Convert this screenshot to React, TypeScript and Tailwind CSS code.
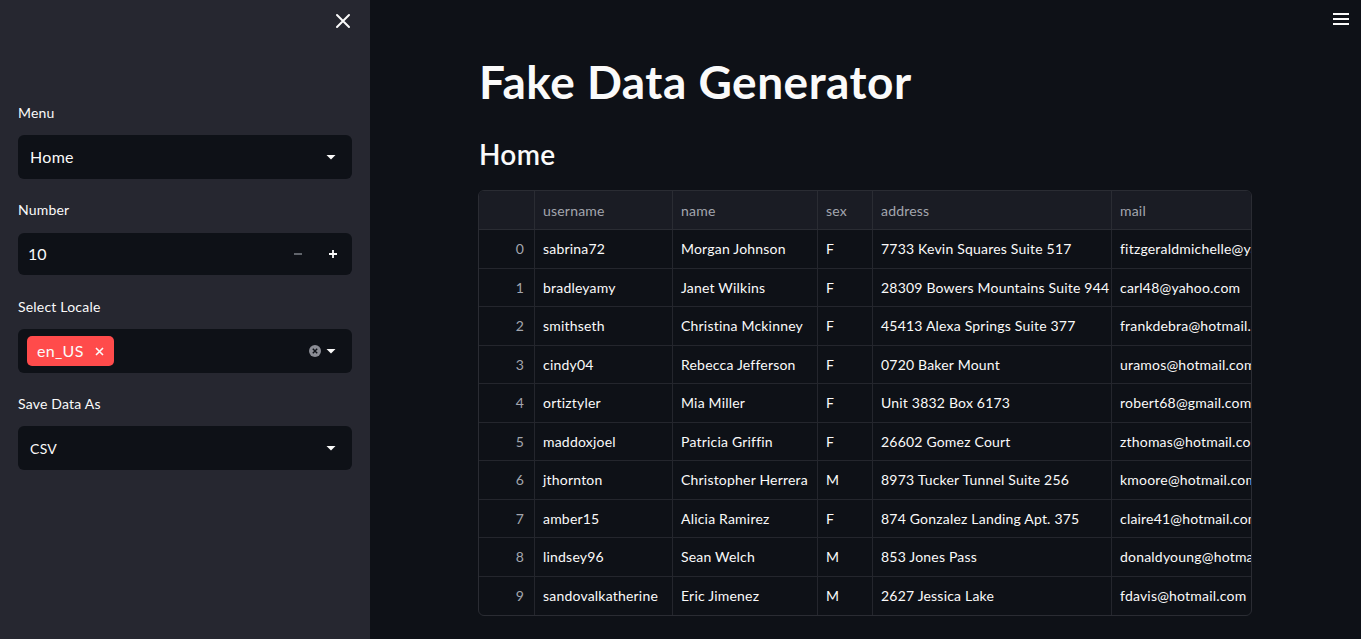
import React from "react";

const rows = [
  ["sabrina72", "Morgan Johnson", "F", "7733 Kevin Squares Suite 517", "fitzgeraldmichelle@yahoo.com"],
  ["bradleyamy", "Janet Wilkins", "F", "28309 Bowers Mountains Suite 944", "carl48@yahoo.com"],
  ["smithseth", "Christina Mckinney", "F", "45413 Alexa Springs Suite 377", "frankdebra@hotmail.com"],
  ["cindy04", "Rebecca Jefferson", "F", "0720 Baker Mount", "uramos@hotmail.com"],
  ["ortiztyler", "Mia Miller", "F", "Unit 3832 Box 6173", "robert68@gmail.com"],
  ["maddoxjoel", "Patricia Griffin", "F", "26602 Gomez Court", "zthomas@hotmail.com"],
  ["jthornton", "Christopher Herrera", "M", "8973 Tucker Tunnel Suite 256", "kmoore@hotmail.com"],
  ["amber15", "Alicia Ramirez", "F", "874 Gonzalez Landing Apt. 375", "claire41@hotmail.com"],
  ["lindsey96", "Sean Welch", "M", "853 Jones Pass", "donaldyoung@hotmail.com"],
  ["sandovalkatherine", "Eric Jimenez", "M", "2627 Jessica Lake", "fdavis@hotmail.com"],
];

const cols = [
  { key: "username", w: "w-[138px]" },
  { key: "name", w: "w-[145px]" },
  { key: "sex", w: "w-[55px]" },
  { key: "address", w: "w-[239px]" },
  { key: "mail", w: "w-[200px]" },
];

const Caret = () => (
  <svg width="12" height="12" viewBox="0 0 12 12" className="shrink-0">
    <path d="M1.5 4h9L6 8.5z" fill="#fafafa" />
  </svg>
);

const Label = ({ children, mb = "mb-[13px]" }: { children: React.ReactNode; mb?: string }) => (
  <div className={`text-[14px] text-[#fafafa] leading-[18px] tracking-[0.2px] ${mb}`}>{children}</div>
);

const App = () => {
  return (
    <div className="flex w-[1361px] h-[639px] overflow-hidden bg-[#0e1117] font-['Lato','Noto_Sans',sans-serif] text-[#fafafa]">
      <aside className="w-[370px] shrink-0 bg-[#262730] px-[18px] flex flex-col">
        <div className="flex justify-end pt-[13px] h-[104px]">
          <svg width="16" height="16" viewBox="0 0 16 16" className="mr-[1px]">
            <path d="M2 2l12 12M14 2L2 14" stroke="#fafafa" strokeWidth="2" strokeLinecap="round" />
          </svg>
        </div>

        <Label>Menu</Label>
        <div className="h-[44px] rounded-[6px] bg-[#0e1117] flex items-center justify-between pl-[12px] pr-[15px] mb-[22px]">
          <span className="text-[16px] tracking-[0.3px]">Home</span>
          <Caret />
        </div>

        <Label mb="mb-[14px]">Number</Label>
        <div className="h-[42px] rounded-[6px] bg-[#0e1117] flex items-center pl-[10px] mb-[23px]">
          <span className="text-[16px] flex-1">10</span>
          <div className="flex items-center gap-[25px] pr-[14px]">
            <svg width="10" height="10" viewBox="0 0 10 10">
              <path d="M1 5h8" stroke="#7d8089" strokeWidth="1.5" />
            </svg>
            <svg width="10" height="10" viewBox="0 0 10 10">
              <path d="M1 5h8M5 1v8" stroke="#fafafa" strokeWidth="1.8" />
            </svg>
          </div>
        </div>

        <Label>Select Locale</Label>
        <div className="h-[44px] rounded-[6px] bg-[#0e1117] flex items-center pl-[9px] pr-[15px] mb-[22px]">
          <div className="h-[30px] px-[10px] rounded-[5px] bg-[#ff4b4b] flex items-center gap-[11px] text-[16px] tracking-[0.3px]">
            <span>en_US</span>
            <svg width="9" height="9" viewBox="0 0 9 9">
              <path d="M1 1l7 7M8 1L1 8" stroke="#fafafa" strokeWidth="1.6" />
            </svg>
          </div>
          <div className="flex-1" />
          <svg width="12" height="12" viewBox="0 0 12 12" className="mr-[4px]">
            <circle cx="6" cy="6" r="6" fill="#8b8d95" />
            <path d="M3.8 3.8l4.4 4.4M8.2 3.8L3.8 8.2" stroke="#0e1117" strokeWidth="1.4" />
          </svg>
          <Caret />
        </div>

        <Label>Save Data As</Label>
        <div className="h-[44px] rounded-[6px] bg-[#0e1117] flex items-center justify-between pl-[12px] pr-[15px]">
          <span className="text-[14px] tracking-[0.3px]">CSV</span>
          <Caret />
        </div>
      </aside>

      <main className="flex-1 relative flex justify-center">
        <svg width="18" height="14" viewBox="0 0 18 14" className="absolute top-[12px] right-[11px]">
          <path d="M1 2h16M1 7h16M1 12h16" stroke="#fafafa" strokeWidth="2" />
        </svg>
        <div className="w-[774px] pt-[52px] ml-[-1px]">
          <h1 className="text-[46px] font-bold leading-[60px] ml-[1px] tracking-[0.5px]">Fake Data Generator</h1>
          <h2 className="text-[28px] font-semibold leading-[36px] mt-[24px] ml-[1px] tracking-[0.3px]">Home</h2>
          <div className="mt-[18px] rounded-[6px] border border-[#2a2c33] overflow-hidden text-[14px] tracking-[0.2px]">
            <div className="flex h-[39px] bg-[#1a1c24] border-b border-[#2a2c33] text-[#a3a6ae]">
              <div className="w-[56px] shrink-0 border-r border-[#2a2c33]" />
              {cols.map((c) => (
                <div
                  key={c.key}
                  className={`${c.w} shrink-0 border-r border-[#2a2c33] flex items-center pl-[8px] whitespace-nowrap overflow-hidden`}
                >
                  {c.key}
                </div>
              ))}
            </div>
            {rows.map((r, i) => (
              <div key={i} className={`flex h-[38.5px] ${i < rows.length - 1 ? "border-b border-[#24262d]" : ""}`}>
                <div className="w-[56px] shrink-0 border-r border-[#24262d] flex items-center justify-end pr-[10px] text-[#a3a6ae]">
                  {i}
                </div>
                {r.map((v, j) => (
                  <div
                    key={j}
                    className={`${cols[j].w} shrink-0 border-r border-[#24262d] flex items-center pl-[8px] whitespace-nowrap overflow-hidden`}
                  >
                    {v}
                  </div>
                ))}
              </div>
            ))}
          </div>
        </div>
      </main>
    </div>
  );
};

export default App;
